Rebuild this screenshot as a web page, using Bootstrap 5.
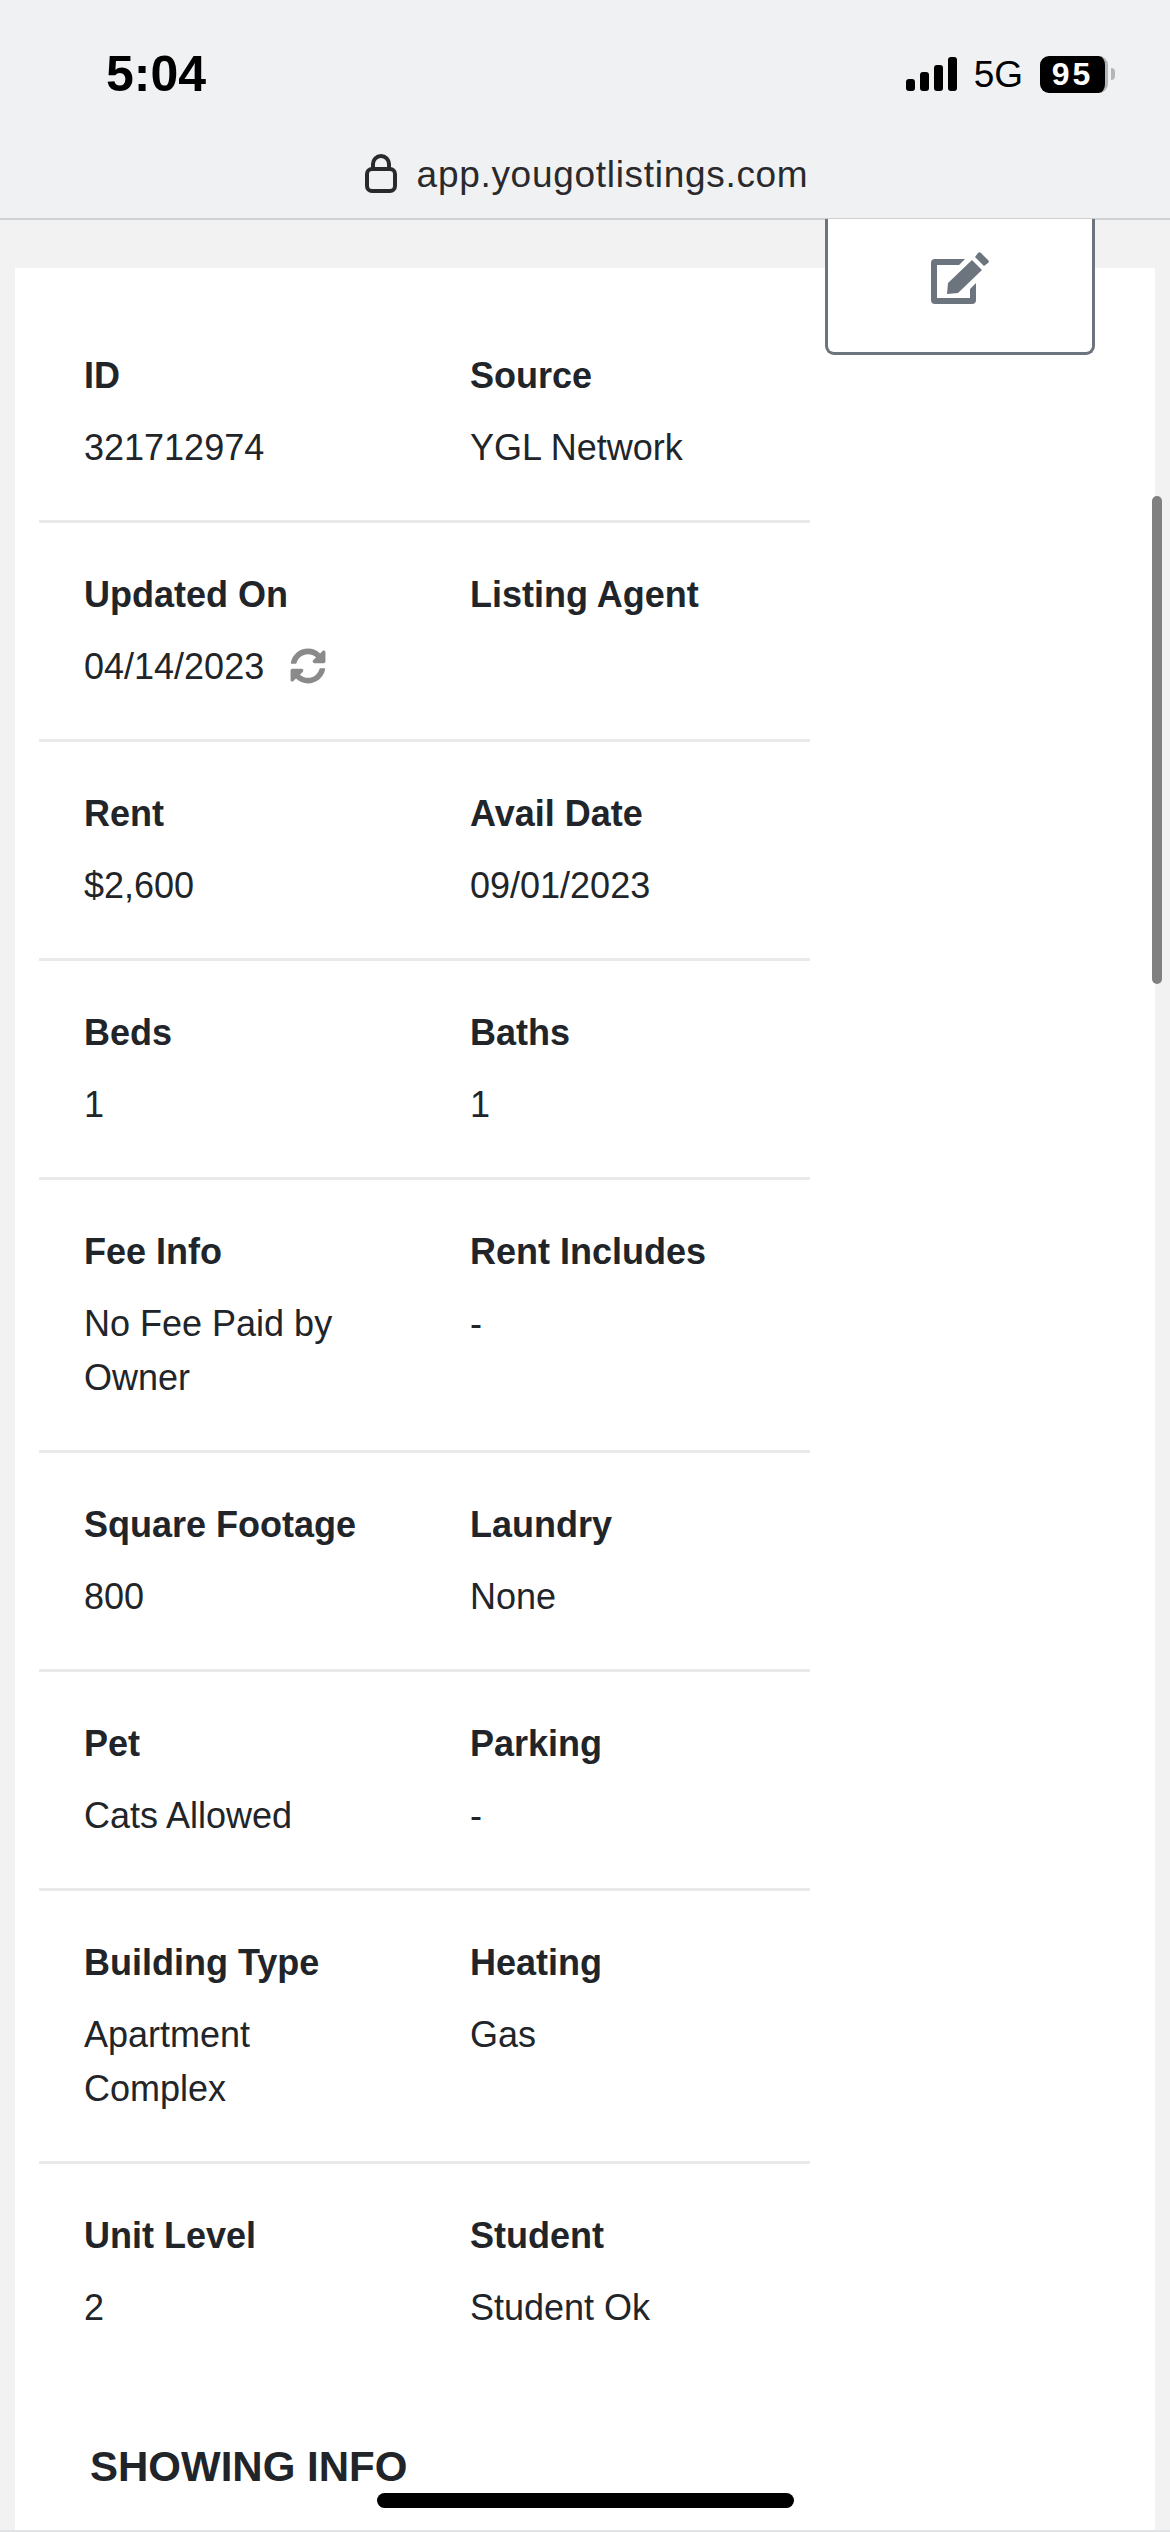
<!DOCTYPE html>
<html lang="en">
<head>
    <meta charset="UTF-8">
    <meta name="viewport" content="width=device-width, initial-scale=1.0">
    <link rel="stylesheet" href="https://cdn.jsdelivr.net/npm/bootstrap@5.3.0/dist/css/bootstrap.min.css">
    <title>Listing</title>
    <style>
        html, body { height: 2532px; overflow: hidden; }
        body { background: #f2f2f3; color: #212529; font-family: "Liberation Sans", Arial, sans-serif; font-size: 36px; line-height: 54px; position: relative; }
        .phone-bar { height: 220px; background: #f0f1f3; border-bottom: 2px solid #cfd0d2; }
        .status-row { height: 148px; padding: 0 55px 0 106px; }
        .clock { font-size: 50px; font-weight: 700; line-height: 1; color: #000; }
        .net { font-size: 37px; line-height: 1; color: #000; margin: 0 17px; }
        .batt { width: 68px; height: 37px; background: #000; border-radius: 9px; color: #fff; font-size: 32px; font-weight: 700; letter-spacing: 3px; line-height: 37px; text-align: center; border-right: 3px solid #b4b5b7; }
        .batt-tip { width: 4px; height: 12px; background: #b4b5b7; border-radius: 0 6px 6px 0; margin-left: 3px; }
        .url-row { font-size: 37px; letter-spacing: .7px; line-height: 54px; color: #2a2a2c; padding-left: 3px; }
        .lock-ico { margin: 0 20px 3px 0; }
        .sheet { background: #fff; margin: 48px 15px 0; height: 2263px; padding: 0 24px; }
        .detail-list { width: 771px; padding-top: 36px; }
        .detail-row { border-bottom: 3px solid #e9eaeb; padding: 45px 0 45px 45px; margin: 0; flex-wrap: nowrap; }
        .detail-row:last-child { border-bottom: 0; }
        .detail-row > div { padding: 0; width: 340px; flex: none; }
        .detail-row > div:first-child { width: 386px; padding-right: 90px; }
        .detail-label { font-weight: 700; margin-bottom: 18px; }
        .refresh-ico { margin-left: 26px; vertical-align: -5px; }
        .edit-btn { position: absolute; left: 825px; top: 219px; width: 270px; height: 136px; padding: 0 0 16px; background: #fff; border: 3px solid #6c757d; border-top: 0; border-radius: 0 0 9px 9px; }
        .section-title { font-size: 42px; font-weight: 700; line-height: 50px; margin: 62px 0 0 51px; color: #212529; }
        .page-scroll { position: absolute; left: 1152px; top: 496px; width: 10px; height: 488px; background: #808080; border-radius: 5px; }
        .home-bar { position: absolute; left: 377px; top: 2493px; width: 417px; height: 15px; background: #000; border-radius: 8px; }
        .bottom-line { position: absolute; left: 0; right: 0; bottom: 0; height: 2px; background: #e2e3e4; }
    </style>
</head>
<body>
    <div class="phone-bar">
        <div class="status-row d-flex align-items-center justify-content-between">
            <span class="clock">5:04</span>
            <div class="d-flex align-items-center">
                <svg width="51" height="34" viewBox="0 0 51 34">
                    <rect x="0" y="22" width="9" height="12" rx="3" fill="#000"/>
                    <rect x="14" y="15" width="9" height="19" rx="3" fill="#000"/>
                    <rect x="28" y="8" width="9" height="26" rx="3" fill="#000"/>
                    <rect x="42" y="0" width="9" height="34" rx="3" fill="#000"/>
                </svg>
                <span class="net">5G</span>
                <div class="batt">95</div>
                <div class="batt-tip"></div>
            </div>
        </div>
        <div class="url-row d-flex justify-content-center align-items-center">
            <svg class="lock-ico" width="32" height="39" viewBox="0 0 32 39">
                <path d="M8 16V10a8 8 0 0 1 16 0v6" fill="none" stroke="#2a2a2c" stroke-width="4"/>
                <rect x="2" y="15" width="28" height="22" rx="5" fill="none" stroke="#2a2a2c" stroke-width="4"/>
            </svg>
            <span>app.yougotlistings.com</span>
        </div>
    </div>

    <div class="sheet">
        <div class="detail-list">
            <div class="row detail-row">
                <div><div class="detail-label">ID</div><div>321712974</div></div>
                <div><div class="detail-label">Source</div><div>YGL Network</div></div>
            </div>
            <div class="row detail-row">
                <div>
                    <div class="detail-label">Updated On</div>
                    <div>04/14/2023<svg class="refresh-ico" width="36" height="36" viewBox="0 0 512 512"><path fill="#8a8a8a" d="M370.72 133.28C339.458 104.008 298.888 87.962 255.848 88c-77.458.068-144.328 53.178-162.791 126.85-1.344 5.363-6.122 9.15-11.651 9.15H24.103c-7.498 0-13.194-6.807-11.807-14.176C33.933 94.924 134.813 8 256 8c66.448 0 126.791 26.136 171.315 68.685L463.03 40.97C478.149 25.851 504 36.559 504 57.941V192c0 13.255-10.745 24-24 24H345.941c-21.382 0-32.09-25.851-16.971-40.971l41.75-41.749zM32 296h134.059c21.382 0 32.09 25.851 16.971 40.971l-41.75 41.75c31.262 29.273 71.835 45.319 114.876 45.28 77.418-.07 144.315-53.144 162.787-126.849 1.344-5.363 6.122-9.15 11.651-9.15h57.304c7.498 0 13.194 6.807 11.807 14.176C478.067 417.076 377.187 504 256 504c-66.448 0-126.791-26.136-171.315-68.685L48.97 471.03C33.851 486.149 8 475.441 8 454.059V320c0-13.255 10.745-24 24-24z"/></svg></div>
                </div>
                <div><div class="detail-label">Listing Agent</div><div></div></div>
            </div>
            <div class="row detail-row">
                <div><div class="detail-label">Rent</div><div>$2,600</div></div>
                <div><div class="detail-label">Avail Date</div><div>09/01/2023</div></div>
            </div>
            <div class="row detail-row">
                <div><div class="detail-label">Beds</div><div>1</div></div>
                <div><div class="detail-label">Baths</div><div>1</div></div>
            </div>
            <div class="row detail-row">
                <div><div class="detail-label">Fee Info</div><div>No Fee Paid by Owner</div></div>
                <div><div class="detail-label">Rent Includes</div><div>-</div></div>
            </div>
            <div class="row detail-row">
                <div><div class="detail-label">Square Footage</div><div>800</div></div>
                <div><div class="detail-label">Laundry</div><div>None</div></div>
            </div>
            <div class="row detail-row">
                <div><div class="detail-label">Pet</div><div>Cats Allowed</div></div>
                <div><div class="detail-label">Parking</div><div>-</div></div>
            </div>
            <div class="row detail-row">
                <div><div class="detail-label">Building Type</div><div>Apartment Complex</div></div>
                <div><div class="detail-label">Heating</div><div>Gas</div></div>
            </div>
            <div class="row detail-row">
                <div><div class="detail-label">Unit Level</div><div>2</div></div>
                <div><div class="detail-label">Student</div><div>Student Ok</div></div>
            </div>
        </div>
        <h5 class="section-title">SHOWING INFO</h5>
    </div>

    <button type="button" class="edit-btn d-flex align-items-center justify-content-center" aria-label="Edit">
        <svg width="58" height="52" viewBox="0 0 58 52">
            <path fill="#6c757d" d="M4 7h30l-6 6H6v33h33V37l6-6v17a4 4 0 0 1-4 4H4a4 4 0 0 1-4-4V11a4 4 0 0 1 4-4z"/>
            <path fill="#6c757d" d="M41 8l10 10-24 23-11 1 1-11zM44 5l3-4a2 2 0 0 1 3 0l7 7a2 2 0 0 1 0 3l-4 3z"/>
        </svg>
    </button>
    <div class="page-scroll"></div>
    <div class="home-bar"></div>
    <div class="bottom-line"></div>
    <script src="https://cdn.jsdelivr.net/npm/bootstrap@5.3.0/dist/js/bootstrap.bundle.min.js"></script>
</body>
</html>
